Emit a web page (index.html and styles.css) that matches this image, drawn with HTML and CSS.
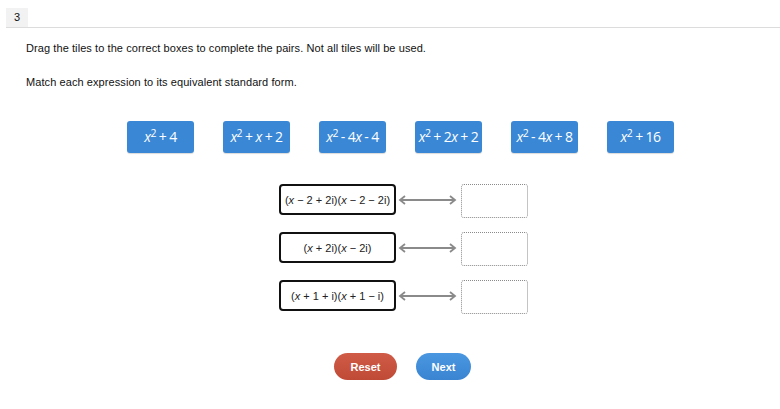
FILE: index.html
```html
<!DOCTYPE html>
<html>
<head>
<meta charset="utf-8">
<link rel="stylesheet" href="styles.css">
</head>
<body>
<div class="header">
  <div class="qnum">3</div>
</div>
<div class="content">
  <p class="instr">Drag the tiles to the correct boxes to complete the pairs. Not all tiles will be used.</p>
  <p class="instr second">Match each expression to its equivalent standard form.</p>
  <div class="tiles">
    <div class="tile"><span><i>x</i><sup>2</sup> + 4</span></div>
    <div class="tile"><span><i>x</i><sup>2</sup> + <i>x</i> + 2</span></div>
    <div class="tile"><span><i>x</i><sup>2</sup> - 4<i>x</i> - 4</span></div>
    <div class="tile"><span><i>x</i><sup>2</sup> + 2<i>x</i> + 2</span></div>
    <div class="tile"><span><i>x</i><sup>2</sup> - 4<i>x</i> + 8</span></div>
    <div class="tile"><span><i>x</i><sup>2</sup> + 16</span></div>
  </div>
  <div class="pairs">
    <div class="pair">
      <div class="expr"><span>(<i>x</i> − 2 + 2i)(<i>x</i> − 2 − 2i)</span></div>
      <svg class="arrow" width="60" height="12" viewBox="0 0 60 12"><path d="M7 2 L2 6 L7 10 M2 6 H57 M52 2 L57 6 L52 10" fill="none" stroke="#8a8a8a" stroke-width="1.8"/></svg>
      <div class="drop"></div>
    </div>
    <div class="pair">
      <div class="expr"><span>(<i>x</i> + 2i)(<i>x</i> − 2i)</span></div>
      <svg class="arrow" width="60" height="12" viewBox="0 0 60 12"><path d="M7 2 L2 6 L7 10 M2 6 H57 M52 2 L57 6 L52 10" fill="none" stroke="#8a8a8a" stroke-width="1.8"/></svg>
      <div class="drop"></div>
    </div>
    <div class="pair">
      <div class="expr"><span>(<i>x</i> + 1 + i)(<i>x</i> + 1 − i)</span></div>
      <svg class="arrow" width="60" height="12" viewBox="0 0 60 12"><path d="M7 2 L2 6 L7 10 M2 6 H57 M52 2 L57 6 L52 10" fill="none" stroke="#8a8a8a" stroke-width="1.8"/></svg>
      <div class="drop"></div>
    </div>
  </div>
  <div class="buttons">
    <button class="btn reset">Reset</button>
    <button class="btn next">Next</button>
  </div>
</div>
</body>
</html>
```
FILE: styles.css
```css
html, body {
  margin: 0;
  padding: 0;
  background: #fff;
  font-family: "Liberation Sans", Arial, sans-serif;
  color: #111;
}
.header {
  margin: 8px 0 0 6px;
  border-bottom: 1px solid #dcdcdc;
  height: 19px;
}
.qnum {
  width: 22px;
  height: 19px;
  background: #f2f2f2;
  font-size: 11px;
  line-height: 19px;
  text-align: center;
}
.content {
  padding: 0 0 0 26px;
}
.instr {
  margin: 14px 0 0;
  font-size: 11px;
  line-height: 13px;
  letter-spacing: 0.08px;
}
.instr.second {
  margin-top: 21px;
}
.tiles {
  display: flex;
  gap: 29px;
  margin: 32px 0 0 101px;
}
.tile {
  width: 67px;
  height: 32px;
  box-sizing: border-box;
  background: #3a87d6;
  border-radius: 3px;
  color: #fff;
  font-family: "Open Sans", sans-serif;
  font-size: 14px;
  letter-spacing: -0.6px;
  display: flex;
  align-items: center;
  justify-content: center;
  padding-bottom: 1px;
  white-space: nowrap;
  box-shadow: 0 1px 1px rgba(0,0,0,0.15);
}
.tile sup {
  font-size: 10.5px;
  line-height: 0;
  vertical-align: 5px;
}
.pairs {
  display: flex;
  flex-direction: column;
  gap: 17px;
  margin: 31px 0 0 253px;
}
.pair {
  display: flex;
  align-items: center;
  height: 31px;
}
.expr {
  width: 117px;
  height: 31px;
  box-sizing: border-box;
  border: 2px solid #111;
  border-radius: 4px;
  font-size: 11px;
  display: flex;
  align-items: center;
  justify-content: center;
  white-space: nowrap;
  color: #222;
}
.arrow {
  margin-left: 2px;
  display: block;
}
.drop {
  width: 67px;
  height: 34px;
  box-sizing: border-box;
  border: 1px dotted #8a8a8a;
  border-radius: 3px;
  margin-left: 3px;
  margin-top: 3px;
}
.buttons {
  display: flex;
  gap: 19px;
  margin: 42px 0 0 308px;
}
.btn {
  height: 27px;
  border: none;
  border-radius: 14px;
  color: #fff;
  font-family: "Liberation Sans", Arial, sans-serif;
  font-weight: bold;
  font-size: 11px;
  padding: 0;
}
.reset {
  width: 63px;
  background: linear-gradient(#d05c48, #bf4a36);
}
.next {
  width: 55px;
  background: linear-gradient(#4a97e0, #3a84d2);
}
```
